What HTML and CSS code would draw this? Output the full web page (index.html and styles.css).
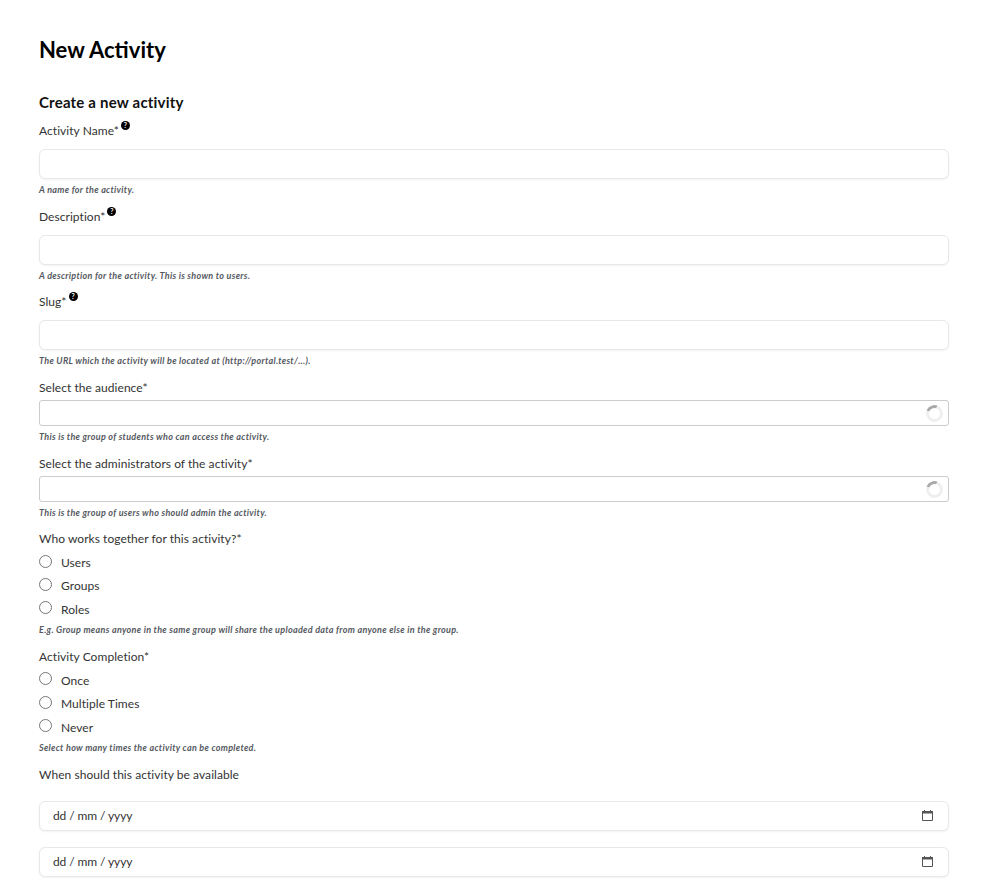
FILE: index.html
```html
<!DOCTYPE html>
<html lang="en">
  <head>
    <meta charset="UTF-8" />
    <meta name="viewport" content="width=device-width, initial-scale=1" />
    <title>New Activity</title>
    <link rel="stylesheet" href="styles.css">
  </head>

  <body>
    <main class="page">
      <h1>New Activity</h1>
      <h2>Create a new activity</h2>

      <form class="activity-form">
        <div class="field field-text">
          <label class="field-label" for="name">Activity Name*<span class="help-icon">?</span></label>
          <input class="text-input" id="name" type="text" />
          <p class="field-help">A name for the activity.</p>
        </div>

        <div class="field field-text">
          <label class="field-label" for="description">Description*<span class="help-icon">?</span></label>
          <input class="text-input" id="description" type="text" />
          <p class="field-help">A description for the activity. This is shown to users.</p>
        </div>

        <div class="field field-text">
          <label class="field-label" for="slug">Slug*<span class="help-icon">?</span></label>
          <input class="text-input" id="slug" type="text" />
          <p class="field-help">The URL which the activity will be located at (http://portal.test/...).</p>
        </div>

        <div class="field">
          <label class="field-label">Select the audience*</label>
          <div class="loading-select"><span class="spinner"></span></div>
          <p class="field-help">This is the group of students who can access the activity.</p>
        </div>

        <div class="field">
          <label class="field-label">Select the administrators of the activity*</label>
          <div class="loading-select"><span class="spinner"></span></div>
          <p class="field-help">This is the group of users who should admin the activity.</p>
        </div>

        <div class="field field-radio">
          <span class="field-label">Who works together for this activity?*</span>
          <div class="radio-list">
            <label class="radio-row"><input type="radio" name="together" /><span>Users</span></label>
            <label class="radio-row"><input type="radio" name="together" /><span>Groups</span></label>
            <label class="radio-row"><input type="radio" name="together" /><span>Roles</span></label>
          </div>
          <p class="field-help">E.g. Group means anyone in the same group will share the uploaded data from anyone else in the group.</p>
        </div>

        <div class="field">
          <span class="field-label">Activity Completion*</span>
          <div class="radio-list">
            <label class="radio-row"><input type="radio" name="completion" /><span>Once</span></label>
            <label class="radio-row"><input type="radio" name="completion" /><span>Multiple Times</span></label>
            <label class="radio-row"><input type="radio" name="completion" /><span>Never</span></label>
          </div>
          <p class="field-help">Select how many times the activity can be completed.</p>
        </div>

        <div class="field">
          <span class="field-label">When should this activity be available</span>
          <div class="date-list">
            <div class="date-input">
              <span>dd / mm / yyyy</span>
              <svg viewBox="0 0 11 11" width="11" height="11"><path d="M.5 1.5h10v9H.5z" fill="none" stroke="#555" /><path d="M0 1h11v2.5H0z" fill="#555" /><path d="M2.5 0v2M8.5 0v2" stroke="#555" /></svg>
            </div>
            <div class="date-input">
              <span>dd / mm / yyyy</span>
              <svg viewBox="0 0 11 11" width="11" height="11"><path d="M.5 1.5h10v9H.5z" fill="none" stroke="#555" /><path d="M0 1h11v2.5H0z" fill="#555" /><path d="M2.5 0v2M8.5 0v2" stroke="#555" /></svg>
            </div>
          </div>
        </div>
      </form>
    </main>
  </body>
</html>
```

FILE: styles.css
```css
* {
  box-sizing: border-box;
}

html,
body {
  height: 879px;
  overflow: hidden;
}

body {
  margin: 0;
  background: #fff;
  color: #333;
  font-family: "Lato", "Liberation Sans", sans-serif;
}

.page {
  padding: 36px 33px 0 39px;
}

h1 {
  margin: 0;
  height: 28px;
  font-size: 22px;
  line-height: 28px;
  font-weight: 700;
  color: #000;
}

h2 {
  margin: 28px 0 0;
  height: 20px;
  font-size: 15px;
  line-height: 20px;
  font-weight: 700;
  letter-spacing: 0.2px;
  color: #111;
}

.field {
  padding-top: 13px;
}

.field:first-child {
  padding-top: 10px;
}

.field-text {
  padding-top: 11.7px;
}

.field-radio {
  padding-top: 12px;
}

.field-label {
  display: block;
  height: 16px;
  font-size: 12px;
  line-height: 16px;
  letter-spacing: 0.05px;
  white-space: nowrap;
}

.field-text .field-label {
  line-height: 18px;
}

.help-icon {
  display: inline-block;
  width: 9px;
  height: 9px;
  margin-top: -4px;
  margin-left: 2px;
  border-radius: 50%;
  background: #000;
  color: #fff;
  font-size: 7px;
  font-weight: 700;
  line-height: 9px;
  letter-spacing: 0;
  text-align: center;
  vertical-align: 7px;
}

.text-input,
.date-input {
  display: block;
  width: 100%;
  height: 30px;
  border: 1px solid #e8e8e8;
  border-radius: 6px;
  background: #fff;
  box-shadow: 0 1px 2px rgba(0, 0, 0, 0.05);
}

.text-input {
  margin-top: 11px;
  outline: none;
}

.field-help {
  margin: 3px 0 0;
  height: 12px;
  font-size: 9px;
  line-height: 12px;
  font-style: italic;
  font-weight: 700;
  color: #55595f;
  letter-spacing: 0.3px;
}

.field-text .field-help {
  margin-top: 5px;
}

/* selects still loading their options */
.loading-select {
  display: flex;
  align-items: center;
  justify-content: flex-end;
  height: 26px;
  margin-top: 4px;
  margin-bottom: 5px;
  padding-right: 5px;
  border: 1px solid #ccc;
  border-radius: 3px;
  background: #fff;
}

.spinner {
  width: 17px;
  height: 17px;
  border: 3px solid #efefef;
  border-top-color: #aaa;
  border-radius: 50%;
  transform: rotate(-25deg);
}

.radio-list {
  margin-top: 3.5px;
}

.radio-row {
  display: flex;
  align-items: center;
  gap: 9px;
  height: 23.4px;
  font-size: 12px;
  letter-spacing: 0.05px;
}

.radio-row input {
  width: 13px;
  height: 13px;
  margin: 0;
  appearance: none;
  border: 1px solid #777;
  border-radius: 50%;
  background: #fff;
  position: relative;
  top: -1.5px;
}

.date-list {
  display: flex;
  flex-direction: column;
  gap: 16px;
  margin-top: 18px;
}

.date-input {
  display: flex;
  align-items: center;
  justify-content: space-between;
  padding: 0 15px 0 13px;
  font-size: 12px;
  letter-spacing: -0.1px;
}
```
